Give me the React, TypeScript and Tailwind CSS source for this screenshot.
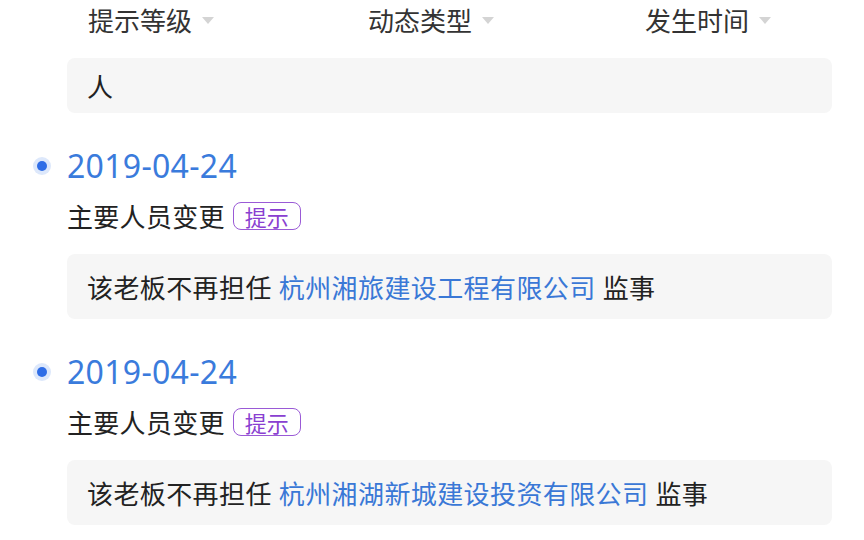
const font = { fontFamily: '"Noto Sans CJK SC", "Noto Sans", sans-serif' }

type Item = {
  date: string
  title: string
  tag: string
  company: string
}

const items: Item[] = [
  { date: '2019-04-24', title: '主要人员变更', tag: '提示', company: '杭州湘旅建设工程有限公司' },
  { date: '2019-04-24', title: '主要人员变更', tag: '提示', company: '杭州湘湖新城建设投资有限公司' },
]

function Caret() {
  return (
    <svg width="12" height="8" viewBox="0 0 12 8" className="ml-[10px] mt-[2px]">
      <path d="M0 0 L12 0 L6 7 Z" fill="#d4d4d4" />
    </svg>
  )
}

function FilterTab({ label, className }: { label: string; className: string }) {
  return (
    <div className={`flex items-center ${className}`}>
      <span className="text-[26px] leading-none text-[#333]">{label}</span>
      <Caret />
    </div>
  )
}

function TimelineItem({ item }: { item: Item }) {
  return (
    <div className="relative">
      <div className="flex h-[40px] items-center">
        <div className="absolute left-[33px] top-[11px] flex h-[18px] w-[18px] items-center justify-center rounded-full bg-[#dde8fb]">
          <div className="h-[10px] w-[10px] rounded-full bg-[#2f6de6]" />
        </div>
        <span
          className="ml-[67px] text-[32px] leading-none tracking-[0.3px] text-[#3a7bdc]"
          style={{ fontFamily: '"Noto Sans", "Open Sans", sans-serif' }}
        >
          {item.date}
        </span>
      </div>
      <div className="mt-[14px] flex h-[32px] items-center pl-[67px]">
        <span className="text-[26px] leading-none tracking-[0.3px] text-[#222]">{item.title}</span>
        <span className="ml-[8px] flex h-[28px] items-center rounded-[8px] border-[1.5px] border-[#9a5ad6] px-[11px] text-[22px] leading-none text-[#8a3fd1]">
          {item.tag}
        </span>
      </div>
      <div className="ml-[67px] mr-[32px] mt-[22px] flex h-[65px] items-center rounded-[8px] bg-[#f6f6f6] pl-[20px]">
        <span className="flex items-center text-[26px] leading-none tracking-[0.4px] text-[#222]">
          <span>该老板不再担任</span>
          <span className="ml-[7px] text-[#3a78d6]">{item.company}</span>
          <span className="ml-[7px]">监事</span>
        </span>
      </div>
    </div>
  )
}

export default function App() {
  return (
    <div className="h-[540px] w-[864px] overflow-hidden bg-white" style={font}>
      <div className="flex h-[40px] items-center">
        <FilterTab label="提示等级" className="ml-[88px]" />
        <FilterTab label="动态类型" className="ml-[154px]" />
        <FilterTab label="发生时间" className="ml-[151px]" />
      </div>
      <div className="ml-[67px] mr-[32px] mt-[18px] flex h-[55px] items-center rounded-[8px] bg-[#f6f6f6] pl-[20px]">
        <span className="text-[26px] leading-none text-[#222]">人</span>
      </div>
      <div className="mt-[33px] flex flex-col gap-[33px]">
        {items.map((item, i) => (
          <TimelineItem key={i} item={item} />
        ))}
      </div>
    </div>
  )
}
